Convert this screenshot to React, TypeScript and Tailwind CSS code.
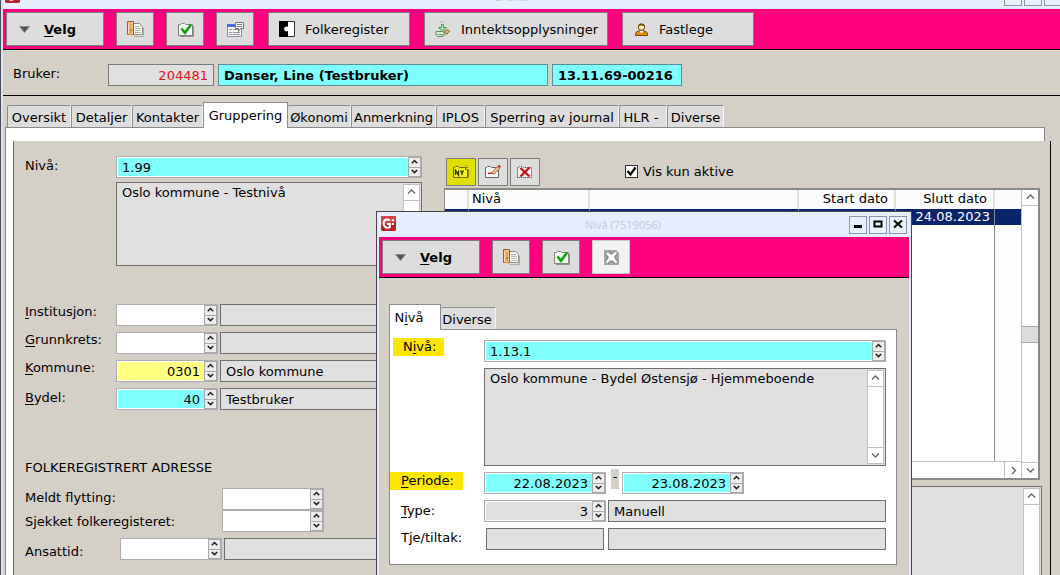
import React, { useId } from "react";
import clsx from "clsx";

/* ---------- icons ---------- */

function DoorIcon() {
  return (
    <svg width="18" height="18" viewBox="0 0 18 18" aria-hidden="true">
      <path d="M5.500 3.500h8l3 3v8h-11z" fill="#fbfbf6" stroke="#8d8d88" />
      <path d="M9 6.500h5M9 8.500h6M9 10.500h6M9 12.500h6" stroke="#b5b5b0" />
      <path d="M8 16.500h9.500V8" fill="none" stroke="#a9a9a5" />
      <path d="M1.500 1.500h6v13h-6z" fill="#f8c992" stroke="#8c6239" />
      <path d="M2 2 6.500 4v12.500L2 14z" fill="#f0a860" />
      <path d="M2.500 3v11" stroke="#ffe0b5" />
      <path d="M4.500 9.500h1V11h-1z" fill="#6b4423" />
    </svg>
  );
}

function FolderCheckIcon() {
  return (
    <svg width="17" height="17" viewBox="0 0 17 17" aria-hidden="true">
      <path d="M3 15.500h13.500V5" fill="none" stroke="#8f8f8f" />
      <path d="M1.500 14.500v-11h2l1-1h3l1 1h7v11z" fill="#f4f7f2" stroke="#7d877d" />
      <path d="M4.500 7.500 8 11.800 14 3.500" fill="none" stroke="#12a312" strokeWidth="2.600" />
    </svg>
  );
}

function CalendarNoteIcon() {
  return (
    <svg width="19" height="17" viewBox="0 0 19 17" aria-hidden="true">
      <path d="M1.500 3.500h14v12h-14z" fill="#f6f6f6" stroke="#8d8d98" />
      <path d="M1 3h11v3H1z" fill="#4a6fe0" />
      <path d="M3 8.500h3M7 8.500h7M3 11.500h3M7 11.500h7M3 13.500h3M7 13.500h7" stroke="#8f97a8" />
      <path d="M9.500 1.500h8v6h-3l-2 3v-3h-3z" fill="#fafafa" stroke="#6f7480" />
      <path d="M11 3.500h5M11 5.500h5" stroke="#7c828e" />
    </svg>
  );
}

function PuzzleIcon() {
  return (
    <svg width="16" height="16" viewBox="0 0 16 16" aria-hidden="true">
      <path d="M.5.500h15v15H.5z" fill="#fff" stroke="#333" />
      <path d="M0 0h9v16H0z" fill="#000" />
      <circle cx="7.500" cy="8" r="2.400" fill="#fff" />
      <path d="M8 6.800h2v2.400H8z" fill="#fff" />
    </svg>
  );
}

function IncomeIcon() {
  return (
    <svg width="16" height="17" viewBox="0 0 16 17" aria-hidden="true">
      <path d="M6.500 3.500h2v3h3L7.500 10 3.500 6.500h3z" fill="#a6eba0" stroke="#4d9d57" />
      <path d="M5.500 1h4" stroke="#7f8f9f" strokeDasharray="1 1" />
      <path d="M9 10.500 13 8.500l1.500 1.500-3 3.500z" fill="#d8b77c" stroke="#7d6430" />
      <path d="M1 10.500h6.500l2 1.500-1 3-5 .8L1 14z" fill="#d7f0cf" stroke="#5c8660" />
      <path d="M3 13.500h5" stroke="#6aa070" />
    </svg>
  );
}

function PersonIcon() {
  return (
    <svg width="15" height="15" viewBox="0 0 15 15" aria-hidden="true">
      <path d="M1.500 13.500V11L4 9h7l2.500 2v2.500z" fill="#d98f0a" stroke="#7a4a00" />
      <path d="M5.500 9 7.500 11.500 9.500 9z" fill="#fff" />
      <circle cx="7.500" cy="5" r="3.200" fill="#ffeec2" stroke="#6b4708" />
      <path d="M4.300 4.200C4.300.8 10.700.8 10.700 4.200 8.500 3.500 7 2.800 4.300 4.200z" fill="#7a4a00" />
    </svg>
  );
}

function DisabledIcon() {
  return (
    <svg width="17" height="17" viewBox="0 0 17 17" aria-hidden="true">
      <path d="M1 1h12l3 3v12H1z" fill="#a6a6a6" />
      <path d="M4 4 13.500 13.500M13 3.500 3.500 13.500" stroke="#6f6f6f" strokeWidth="4.600" />
      <path d="M4 4 13.500 13.500M13 3.500 3.500 13.500" stroke="#f8f8f8" strokeWidth="3" />
      <path d="M8.500 5.500v6M5.500 8.500h6" stroke="#f8f8f8" strokeWidth="2" />
    </svg>
  );
}

function FolderNewIcon() {
  return (
    <svg width="18" height="16" viewBox="0 0 18 16" aria-hidden="true">
      <path d="M1.500 13.500v-10h1l1-1h3l1 1h6v2h2v8z" fill="#f2ee1c" stroke="#6d6a00" />
      <path d="M3.500 11V6.500L6.500 11V6.500M8.500 6.500 10 9l1.500-2.500M10 9v2" fill="none" stroke="#2b2a00" strokeWidth="1.300" />
      <path d="M14 3.500h2M13.500 1l1 1.500M16.500 5.500v8" stroke="#8c8700" />
    </svg>
  );
}

function FolderEditIcon() {
  return (
    <svg width="18" height="16" viewBox="0 0 18 16" aria-hidden="true">
      <path d="M1.500 13.500v-10h1l1-1h3l1 1h7v10z" fill="#f8f8f6" stroke="#666" />
      <path d="M4 9.500 8 8.800" stroke="#c22" strokeWidth="1.300" />
      <path d="M7.500 9 13.500 2.500 16 4.500 10 10z" fill="#f1c595" stroke="#a0623a" />
      <path d="M13.500 2 15 .8l2 1.700-1.200 1.600z" fill="#b33" />
    </svg>
  );
}

function FolderDeleteIcon() {
  return (
    <svg width="18" height="16" viewBox="0 0 18 16" aria-hidden="true">
      <path d="M1.500 13.500v-10h1l1-1h3l1 1h8v10z" fill="#efefed" stroke="#333" strokeDasharray="1 1" />
      <path d="M4.500 4 13.500 12.500M13.500 3.500 4.500 12.500" stroke="#c4161c" strokeWidth="2.400" />
    </svg>
  );
}

function AppLogo() {
  return (
    <svg width="15" height="15" viewBox="0 0 16 16" aria-hidden="true" className="mb-0.5 mr-px shrink-0">
      <rect width="16" height="16" rx="1.500" fill="#b9242b" />
      <path d="M0 1.500A1.500 1.500 0 0 1 1.500 0h13A1.500 1.500 0 0 1 16 1.500V6L0 10z" fill="#d2434a" />
      <path d="M9.500 4.800C6.500 2.500 2.800 4 2.800 8s3.500 5.500 6.700 3.800V8.500H6.500" fill="none" stroke="#fff" strokeWidth="2.200" />
      <path d="M11.500 7.500h2.200v2.200h-2.200zM11.500 3.500h2.200v2.200h-2.200z" fill="#fff" />
    </svg>
  );
}

type Dir = "up" | "down" | "right";

function Chevron({ dir, small }: { dir: Dir; small?: boolean }) {
  const d = { up: "M1 5.500 4.500 2 8 5.500", down: "M1 2.500 4.500 6 8 2.500", right: "M3 1 6.500 4.500 3 8" }[dir];
  return (
    <svg
      width={small ? 7 : 9}
      height={small ? 7 : 9}
      viewBox="0 0 9 9"
      aria-hidden="true"
      fill="none"
      stroke={small ? "#222" : "#666"}
      strokeWidth={small ? 2 : 1.4}
    >
      <path d={d} />
    </svg>
  );
}

/* ---------- window parts ---------- */

function TitleBar({ title, className }: { title: string; className?: string }) {
  const box = "flex size-[18px] items-center justify-center border border-[#8795ae] bg-[#e9f0fe] pb-0.5";
  return (
    <header className={clsx("flex h-[25px] shrink-0 items-center bg-[#e6eeff] pl-0.5 pr-0.5", className)}>
      <AppLogo />
      <h2 className="flex-1 text-center font-['Open_Sans',sans-serif] text-[11px] text-[#c6c9d0]">{title}</h2>
      <div className="flex gap-0.5">
        <button className={box} aria-label="Minimer">
          <svg width="10" height="10" viewBox="0 0 10 10"><path d="M1 6h8v3H1z" /></svg>
        </button>
        <button className={box} aria-label="Maksimer">
          <svg width="10" height="10" viewBox="0 0 10 10"><path d="M1.500 2.500h7v5h-7z" fill="none" stroke="#000" strokeWidth="2" /></svg>
        </button>
        <button className={box} aria-label="Lukk">
          <svg width="10" height="10" viewBox="0 0 10 10"><path d="M1 1.500 9 8.500M9 1.500 1 8.500" stroke="#000" strokeWidth="2.200" /></svg>
        </button>
      </div>
    </header>
  );
}

const toolButton = "flex h-[34px] shrink-0 items-center border border-[#7d7d7d] bg-[#dddddd]";

function Toolbar({ children }: { children: React.ReactNode }) {
  return (
    <div className="flex h-[41px] shrink-0 items-start gap-3 border-b border-black bg-[#ff007f] pl-[3px] pt-[3px]">
      <button className={clsx(toolButton, "w-[98px] gap-[14px] pl-3 font-bold")}>
        <svg width="11" height="7" viewBox="0 0 11 7" aria-hidden="true">
          <path d="M.5.500h10L5.500 6.500z" fill="#555" stroke="#888" />
        </svg>
        <span><u className="underline-offset-2">V</u>elg</span>
      </button>
      {children}
    </div>
  );
}

function IconButton({ label, children, disabled }: { label: string; children: React.ReactNode; disabled?: boolean }) {
  return (
    <button
      aria-label={label}
      disabled={disabled}
      className={clsx(
        "flex h-[34px] w-[38px] shrink-0 items-center justify-center border",
        disabled ? "border-[#c9c9c9] bg-[#f2f2f2]" : "border-[#7d7d7d] bg-[#dddddd]",
      )}
    >
      {children}
    </button>
  );
}

/* ---------- form parts ---------- */

function Spinner() {
  const b = "flex flex-1 items-center justify-center bg-[#ececec]";
  return (
    <span className="flex w-[13px] shrink-0 flex-col gap-px bg-[#a9a9ad] p-px">
      <button className={b} aria-label="Opp" tabIndex={-1}><Chevron dir="up" small /></button>
      <button className={b} aria-label="Ned" tabIndex={-1}><Chevron dir="down" small /></button>
    </span>
  );
}

type FieldProps = {
  id?: string;
  label?: string;
  value?: string;
  tone?: "white" | "cyan" | "yellow" | "gray";
  right?: boolean;
  className?: string;
};

const tones = { white: "bg-white", cyan: "bg-[#80ffff]", yellow: "bg-[#ffff80]", gray: "bg-[#e0e0e0]" };

function SpinField({ id, label, value = "", tone = "white", right, className }: FieldProps) {
  return (
    <span className={clsx("flex h-[22px] shrink-0 border border-[#adadb0] bg-white", className)}>
      <span className="flex min-w-0 flex-1 py-px pl-px">
        <input
          id={id}
          aria-label={label}
          defaultValue={value}
          className={clsx("h-full w-full min-w-0 px-1 pt-px outline-none", tones[tone], right && "text-right")}
        />
      </span>
      <Spinner />
    </span>
  );
}

function Display({ id, label, value = "", className }: FieldProps) {
  return (
    <input
      id={id}
      aria-label={label}
      readOnly
      value={value}
      className={clsx("h-[22px] min-w-0 border border-[#6e6e6e] bg-[#e0e0e0] px-[5px] outline-none", className)}
    />
  );
}

function ScrollColumn({ className, thumb }: { className?: string; thumb?: boolean }) {
  return (
    <div className={clsx("flex w-[17px] shrink-0 flex-col border border-[#c0c0c0] bg-white", className)}>
      <button className="flex h-4 shrink-0 items-center justify-center border-b border-[#c0c0c0]" aria-label="Rull opp" tabIndex={-1}>
        <Chevron dir="up" />
      </button>
      <div className="flex flex-1 flex-col items-stretch">
        {thumb && <div className="mt-[120px] h-[17px] border-y border-[#a8a8a8] bg-[#dcdcdc]" />}
      </div>
      <button className="flex h-4 shrink-0 items-center justify-center border-t border-[#c0c0c0]" aria-label="Rull ned" tabIndex={-1}>
        <Chevron dir="down" />
      </button>
    </div>
  );
}

function TextBox({ label, value, className }: { label: string; value: string; className?: string }) {
  return (
    <div className={clsx("flex border border-[#6e6e6e] bg-[#e0e0e0] p-px", className)}>
      <textarea
        aria-label={label}
        readOnly
        value={value}
        className="min-w-0 flex-1 resize-none overflow-hidden px-1 pt-px leading-4 outline-none"
      />
      <ScrollColumn />
    </div>
  );
}

function Key({ text }: { text: string }) {
  const [before, key, after] = text.split("|");
  return (
    <>
      {before}
      <u className="underline-offset-2">{key}</u>
      {after}
    </>
  );
}

function AddressRow(p: {
  text: React.ReactNode;
  name: string;
  value?: string;
  tone?: "white" | "cyan" | "yellow";
  display?: string;
}) {
  const id = useId();
  return (
    <div className="flex items-start">
      <label htmlFor={id} className="w-[91px] shrink-0 leading-4">{p.text}</label>
      <SpinField id={id} value={p.value} tone={p.tone} right className="w-[102px]" />
      <Display label={p.name} value={p.display} className="ml-0.5 flex-1" />
    </div>
  );
}

function Tab({ text, active, className }: { text: React.ReactNode; active?: boolean; className: string }) {
  return (
    <button
      role="tab"
      aria-selected={!!active}
      className={clsx(
        "shrink-0 whitespace-nowrap border-l border-t border-[#8c8c8c] text-center",
        active
          ? "-mb-px h-[26px] border-r bg-white"
          : "h-[22px] rounded-t-[2px] border-r border-r-[#f4f4f4] bg-[#dddddd] pt-px",
        className,
      )}
    >
      {text}
    </button>
  );
}

/* ---------- level list ---------- */

function LevelList() {
  const th = "h-[19px] border-r-2 border-[#e0e0e0] bg-[#fcfcfc] px-1 pb-0.5 leading-[15px] font-normal";
  const sel = "h-4 border-r border-[#8a8a8a] bg-[#0a246a] p-0 text-white";
  const rest = "border-r border-[#8a8a8a]";
  return (
    <div className="flex h-[292px] border-2 border-l border-[#8a8a8a] bg-white">
      <div className="flex min-w-0 flex-1 flex-col">
        <table className="w-full flex-1 table-fixed border-separate border-spacing-0 leading-4">
          <colgroup>
            <col className="w-6" />
            <col className="w-[121px]" />
            <col />
            <col className="w-[97px]" />
            <col className="w-[99px]" />
            <col className="w-[26px]" />
          </colgroup>
          <thead>
            <tr>
              <th className={th} />
              <th className={clsx(th, "pl-[3px] text-left")}>Nivå</th>
              <th className={th} />
              <th className={clsx(th, "pr-1.5 text-right")}>Start dato</th>
              <th className={clsx(th, "pr-1.5 text-right")}>Slutt dato</th>
              <th className="bg-[#fcfcfc]" />
            </tr>
          </thead>
          <tbody>
            <tr>
              <td className={sel} />
              <td className={sel} />
              <td className={sel} />
              <td className={sel} />
              <td className={clsx(sel, "pr-1 text-right")}>24.08.2023</td>
              <td className="bg-[#0a246a]" />
            </tr>
            <tr className="h-full">
              <td className={rest} />
              <td className={rest} />
              <td className={rest} />
              <td className={rest} />
              <td className={rest} />
              <td className="bg-[#fdfdfd]" />
            </tr>
          </tbody>
        </table>
        <div className="flex h-[17px] shrink-0 justify-end border-t border-[#c0c0c0]">
          <button className="flex w-[17px] items-center justify-center border-l border-[#c0c0c0]" aria-label="Rull til høyre">
            <Chevron dir="right" />
          </button>
        </div>
      </div>
      <ScrollColumn thumb className="border-y-0 border-r-0" />
    </div>
  );
}

/* ---------- dialog ---------- */

function LevelDialog() {
  const id = useId();
  const mark = "bg-[#ffe600] leading-[18px]";
  return (
    <section
      role="dialog"
      aria-label="Nivå"
      className="absolute -bottom-2 left-[375px] top-[211px] flex w-[536px] flex-col border border-[#43464f] bg-[#e6eaf6] px-0.5"
    >
      <TitleBar title="Nivå (7519056)" />
      <Toolbar>
        <IconButton label="Avslutt"><DoorIcon /></IconButton>
        <IconButton label="Lagre"><FolderCheckIcon /></IconButton>
        <IconButton label="Slett" disabled><DisabledIcon /></IconButton>
      </Toolbar>
      <div className="flex-1 bg-[#d4d0c8] pl-[10px] pr-3 pt-[26px]">
        <div role="tablist" className="flex items-end">
          <Tab active text={<Key text="N|i|vå" />} className="relative w-[52px] pr-3" />
          <Tab text="Diverse" className="w-[55px] border-l-0 pr-0.5" />
        </div>
        <div className="border border-[#8a8a8a] bg-white pb-[14px] pr-[10px] pt-2">
          <div className="flex items-start">
            <div className="w-[94px] shrink-0 pl-[3px]">
              <label htmlFor={id + "n"} className={clsx(mark, "inline-block w-[51px] pl-[10px]")}><Key text="N|i|vå:" /></label>
            </div>
            <SpinField id={id + "n"} value="1.13.1" tone="cyan" className="mt-0.5 flex-1" />
          </div>
          <TextBox label="Nivåbeskrivelse" value="Oslo kommune - Bydel Østensjø - Hjemmeboende" className="ml-[94px] mt-1.5 h-[98px]" />
          <div className="mt-1.5 flex items-start">
            <div className="w-[94px] shrink-0">
              <label htmlFor={id + "p"} className={clsx(mark, "block w-[73px] pl-[11px]")}><Key text="|P|eriode:" /></label>
            </div>
            <SpinField id={id + "p"} value="22.08.2023" tone="cyan" right className="w-[122px]" />
            <span className="-mt-[3px] ml-[5px] mr-[3px] h-5 w-2 bg-[#d4d0c8] text-center leading-4">-</span>
            <SpinField label="Periode til" value="23.08.2023" tone="cyan" right className="w-[122px]" />
          </div>
          <div className="mt-1.5 flex items-center">
            <label htmlFor={id + "t"} className="w-[94px] shrink-0 pb-0.5 pl-[11px]"><Key text="|T|ype:" /></label>
            <SpinField id={id + "t"} value="3" tone="gray" right className="w-[122px]" />
            <Display label="Typenavn" value="Manuell" className="ml-0.5 flex-1" />
          </div>
          <div className="mt-1.5 flex items-center">
            <label htmlFor={id + "j"} className="w-[96px] shrink-0 pb-1 pl-[11px]">Tje/tiltak:</label>
            <Display id={id + "j"} className="w-[118px]" />
            <Display label="Tiltaksnavn" className="ml-1 flex-1" />
          </div>
        </div>
      </div>
    </section>
  );
}

/* ---------- page ---------- */

export default function App() {
  const id = useId();
  const small = "flex h-7 w-[30px] items-center justify-center border border-[#7d7d7d]";
  return (
    <div className="relative flex h-screen flex-col overflow-hidden border-l border-[#4b4d58] bg-[#e0e0ec] pl-0.5 font-['DejaVu_Sans',Verdana,sans-serif] text-[13px] leading-[15px] text-black">
      <TitleBar title="Bruker" className="-mr-1 -mt-4" />
      <Toolbar>
        <IconButton label="Avslutt"><DoorIcon /></IconButton>
        <IconButton label="Lagre"><FolderCheckIcon /></IconButton>
        <IconButton label="Kalender"><CalendarNoteIcon /></IconButton>
        <div className="ml-0.5 flex gap-[14px]">
          <button className={clsx(toolButton, "w-[142px] gap-[10px] pl-[10px]")}><PuzzleIcon />Folkeregister</button>
          <button className={clsx(toolButton, "w-[184px] gap-[10px] pl-[10px]")}><IncomeIcon />Inntektsopplysninger</button>
          <button className={clsx(toolButton, "w-[132px] gap-[10px] pl-[11px]")}><PersonIcon />Fastlege</button>
        </div>
      </Toolbar>

      <div className="flex h-[46px] shrink-0 items-center gap-1 border-b border-black bg-[#d4d0c8] pl-[10px] pt-[5px]">
        <label htmlFor={id + "b"} className="w-[91px] pb-1">Bruker:</label>
        <input id={id + "b"} readOnly value="204481" className="h-[22px] w-[106px] border border-[#7a7a7a] bg-[#e0e0e0] px-[5px] text-right text-[#e01018] outline-none" />
        <input aria-label="Navn" readOnly value="Danser, Line (Testbruker)" className="h-[22px] w-[330px] border border-[#5a8f8f] bg-[#80ffff] px-[5px] font-bold outline-none" />
        <input aria-label="Fødselsnummer" readOnly value="13.11.69-00216" className="h-[22px] w-[130px] border border-[#5a8f8f] bg-[#80ffff] px-[5px] font-bold outline-none" />
      </div>

      <main className="flex flex-1 flex-col bg-[#d4d0c8] pl-0.5 pr-[9px] pt-1.5">
        <div role="tablist" className="flex items-end pl-0.5">
          <Tab text="Oversikt" className="w-16" />
          <Tab text="Detaljer" className="w-[61px]" />
          <Tab text="Kontakter" className="w-[71px]" />
          <Tab text="Gruppering" active className="relative w-[85px]" />
          <Tab text="Økonomi" className="w-[63px] border-l-0" />
          <Tab text="Anmerkning" className="w-[85px]" />
          <Tab text="IPLOS" className="w-[49px]" />
          <Tab text="Sperring av journal" className="w-[134px]" />
          <Tab text={<>HLR -&nbsp;</>} className="w-12" />
          <Tab text="Diverse" className="w-[57px]" />
        </div>
        <div className="mr-1.5 h-[14px] shrink-0 border-l border-r border-t border-[#8a8a8a] bg-white" />
        <div className="flex flex-1 border-l border-[#8a8a8a] bg-white pl-[7px]">
          <div className="flex flex-1 items-start gap-[22px] border-l border-r border-l-[#666] border-r-black bg-[#d4d0c8] pl-[11px]">
            <div className="w-[397px] shrink-0 pt-[15px]">
              <div className="flex items-start">
                <label htmlFor={id + "n"} className="w-[91px] shrink-0 pt-0.5">Nivå:</label>
                <SpinField id={id + "n"} value="1.99" tone="cyan" className="flex-1" />
              </div>
              <TextBox label="Nivåbeskrivelse" value="Oslo kommune - Testnivå" className="ml-[91px] mt-1 h-[84px]" />
              <div className="mt-[38px] flex flex-col gap-1.5">
                <AddressRow text={<Key text="|I|nstitusjon:" />} name="Institusjonsnavn" />
                <AddressRow text={<Key text="|G|runnkrets:" />} name="Grunnkretsnavn" />
                <AddressRow text={<Key text="|K|ommune:" />} name="Kommunenavn" value="0301" tone="yellow" display="Oslo kommune" />
                <AddressRow text={<span className="block pt-0.5"><Key text="|B|ydel:" /></span>} name="Bydelsnavn" value="40" tone="cyan" display="Testbruker" />
              </div>
              <h3 className="mt-[50px] uppercase">Folkeregistrert adresse</h3>
              <div className="mt-[13px] flex items-start">
                <label htmlFor={id + "m"} className="w-[197px] pt-0.5">Meldt flytting:</label>
                <SpinField id={id + "m"} className="w-[102px]" />
              </div>
              <div className="flex items-center">
                <label htmlFor={id + "s"} className="w-[197px]">Sjekket folkeregisteret:</label>
                <SpinField id={id + "s"} className="w-[102px]" />
              </div>
              <div className="mt-1.5 flex items-center">
                <label htmlFor={id + "a"} className="w-[95px] pt-1">Ansattid:</label>
                <SpinField id={id + "a"} className="w-[102px]" />
                <Display label="Ansattidsnavn" className="ml-0.5 flex-1" />
              </div>
            </div>

            <div className="min-w-0 flex-1 pr-2">
              <div className="flex items-center gap-0.5 pl-0.5 pt-[17px]">
                <button className={clsx(small, "bg-[#dede00]")} aria-label="Ny"><FolderNewIcon /></button>
                <button className={clsx(small, "bg-[#dddddd]")} aria-label="Endre"><FolderEditIcon /></button>
                <button className={clsx(small, "bg-[#dddddd]")} aria-label="Slett"><FolderDeleteIcon /></button>
                <label className="ml-[83px] flex items-center gap-[5px] pb-0.5">
                  <input type="checkbox" defaultChecked className="peer sr-only" />
                  <span className="flex size-[13px] items-center justify-center border border-[#333] bg-white text-transparent peer-checked:text-black">
                    <svg width="11" height="11" viewBox="0 0 11 11" fill="none" stroke="currentColor" strokeWidth="2.200" aria-hidden="true">
                      <path d="M1.500 5 4.500 8.500 9.500 1.500" />
                    </svg>
                  </span>
                  Vis kun aktive
                </label>
              </div>
              <div className="mt-0.5 pr-0.5"><LevelList /></div>
              <TextBox label="Merknad" value="" className="mt-1.5 h-32" />
            </div>
          </div>
        </div>
      </main>

      <LevelDialog />
    </div>
  );
}
